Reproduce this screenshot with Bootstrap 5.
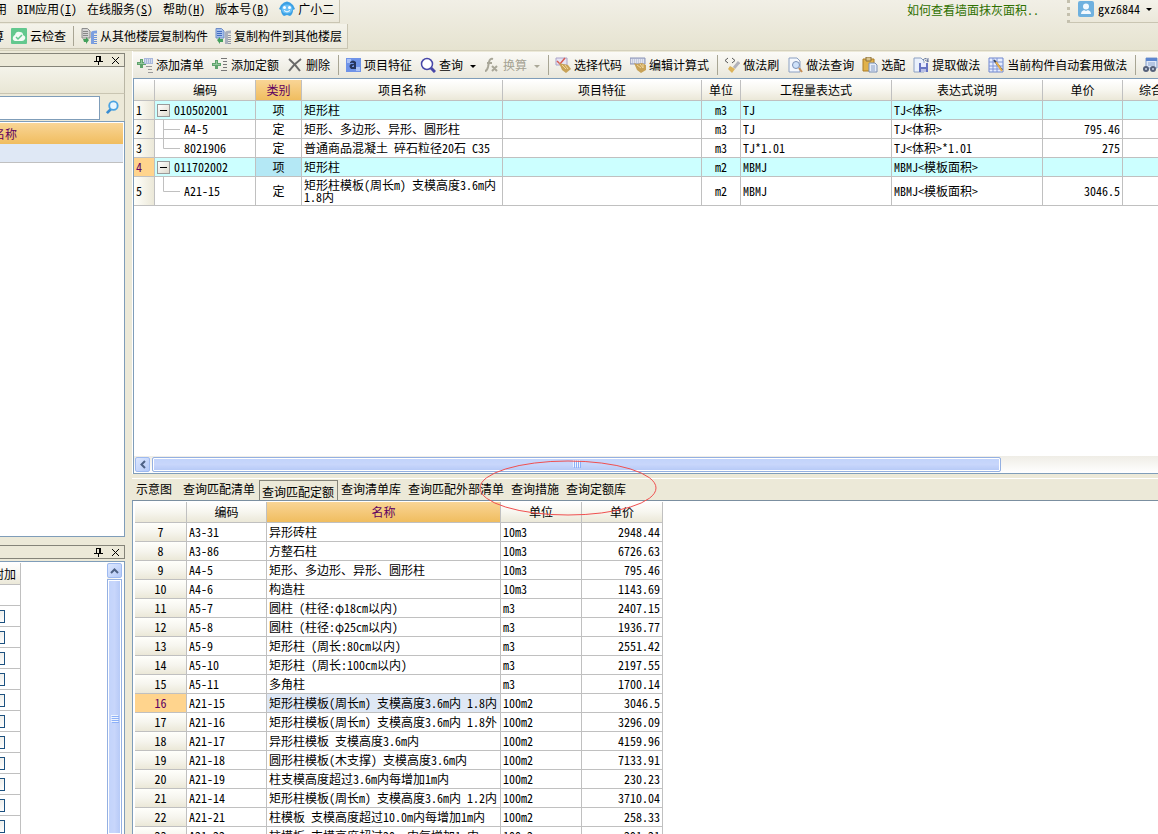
<!DOCTYPE html>
<html lang="zh-CN">
<head>
<meta charset="utf-8">
<meta name="viewport" content="width=device-width, initial-scale=1">
<title>构件做法</title>
<link href="https://cdn.jsdelivr.net/npm/bootstrap@5.3.0/dist/css/bootstrap.min.css" rel="stylesheet">
<script src="https://cdn.jsdelivr.net/npm/bootstrap@5.3.0/dist/js/bootstrap.bundle.min.js"></script>
<style>
:root{--face:#ece9d8;--line:#c0c0c0;--blue:#7f9db9;}
body{font:12px/16px "Noto Sans Mono CJK SC","Noto Sans CJK SC",sans-serif;color:#000;background:var(--face);}
button{font:inherit;color:inherit;border:0;background:none;padding:0;}
a{color:inherit;text-decoration:none;}
svg{display:block;flex:none;}
.ico{width:16px;height:16px;}
.topzone{height:51px;background:linear-gradient(#f1efe6,#e6e3d0);border-bottom:1px solid #d5d1bc;}
.strip{width:max-content;background:linear-gradient(#f4f3ea,#ebe8da);border-right:1px solid #c9c5b2;border-bottom:1px solid #c9c5b2;white-space:nowrap;}
.menus{height:23px;padding:0 5px 4px 0;gap:10px;}
.menus>:first-child{margin-left:-5px;}
.tools2{height:25px;padding-right:5px;gap:7px;margin-top:1px;}
.tools2>:first-child{margin-left:-8px;}
.tools2 button,.menus a{display:flex;gap:3px;}
.menus a{gap:0;}
.menus a svg{margin-right:3px;}
.user{height:23px;padding:0 6px 4px 10px;gap:4px;border-bottom:1px solid #c9c5b2;border-left:3px dotted #c4c0ae;background:linear-gradient(#f4f3ea,#ebe8da);padding-left:8px;}
.user .caret{margin-left:2px;}
.hint{color:#2f7000;margin-right:28px;height:19px;}
.sep{width:1px;height:20px;background:#a8a594;flex:none;margin:0 2px 0 4px;}
.caret{width:0;height:0;border:3px solid transparent;border-top-color:#000;border-bottom:0;flex:none;}
.side{width:125px;padding-top:2px;}
.panel-a{height:62%;}
.dockbar{height:14px;border:1px solid #858479;border-left:0;gap:8px;padding-right:4px;}
.sideline{border-right:1px solid #b9b6a5;}
.blank{height:27px;background:linear-gradient(#f4f3ea,#e9e6d5);border-bottom:1px solid #c9c5b2;}
.find{height:27px;}
.find input{height:24px;width:100px;border:1px solid var(--blue);border-left:0;padding:0 4px;outline:0;}
.find button{margin-left:5px;}
.treebox{border:1px solid var(--blue);border-left:0;background:#fff;padding:1px 1px 0 0;}
.hot{background:linear-gradient(#f9d596,#f0bd5f)!important;color:#600060;}
.treehead{height:21px;}
.treehead span{margin-left:-7px;}
.treesel{height:19px;background:#dfe8f5;border-bottom:1px solid var(--line);}
.pane-b{margin-top:2px;}
.extra{width:21px;}
.extra table{width:45px;flex:none;}
.grid{table-layout:fixed;border-collapse:separate;border-spacing:0;line-height:12px;white-space:nowrap;}
.grid th,.grid td{border:solid var(--line);border-width:0 1px 1px 0;padding:0 2px;height:19px;overflow:hidden;}
.grid thead th{height:21px;font-weight:400;text-align:center;background:linear-gradient(#fff,#f7f6ef 50%,#ebe8d8);padding:0;}
.grid tbody th{font-weight:400;background:linear-gradient(90deg,#fffffb,#ebe8d8);}
.grid tbody tr.list-row td{background:#cff;}
.grid tbody tr.list-row td.curcat{background:#b4e8f5;}
.grid tbody th.curhead{background:#ffd48d;color:#600060;}
.grid .code{padding:0;}
.grid .tall td,.grid .tall th{height:29px;}
.fold{width:13px;height:13px;border:1px solid #9a9a9a;background:linear-gradient(135deg,#fff,#dedacd);margin:0 4px 0 2px;flex:none;}
.fold::before{content:"";display:block;height:1px;margin:0 2px;background:#000;}
.match tbody th{text-align:center;background:linear-gradient(#fffffb,#f6f5ee 50%,#ebe8d8);padding:0;}
.match td.sel{background:#dfe8f5;}
.extra .grid thead th{text-align:right;padding-right:4px;height:22px;}
.extra .grid td{height:21px;padding:0;}
.extra input{appearance:none;display:block;width:13px;height:13px;border:1px solid #1c5180;background:linear-gradient(135deg,#e4e4de,#fff);margin:0 auto;}
.vbar{width:15px;margin-right:1px;background:linear-gradient(90deg,#f1f0ea,#fff);}
.sbtn{width:15px;height:15px;border:1px solid #9ebaf0;border-radius:2px;background:linear-gradient(135deg,#dce7fe,#b4c9f8);flex:none;}
.thumb{border:1px solid #94b0e2;border-radius:2px;box-shadow:inset 0 0 0 1px #fff;background:linear-gradient(#c1d3fb,#c8d6fb 50%,#b4c8f6);}
.vthumb{margin-top:1px;border:1px solid #94b0e2;border-bottom:0;box-shadow:inset 0 0 0 1px #fff;background:linear-gradient(90deg,#c1d3fb,#c8d6fb 50%,#b4c8f6);}
.workarea{margin-left:7px;min-width:0;}
.main-a{height:54%;border-left:1px solid #fff;}
.maintools{height:26px;background:linear-gradient(#fbfaf7,#e9e7db);white-space:nowrap;margin-top:1px;}
.maintools button{padding:0 4px;gap:3px;display:flex;align-items:center;flex:none;}
.maintools button:disabled{color:#a5a293;}
.maintools .caret{margin:2px 0 0 4px;}
.maintools button:disabled .caret{border-top-color:#aaa797;}
.gridbox{border:1px solid var(--blue);border-right:0;background:#fff;padding-top:1px;}
.works{width:1070px;}
.hbar{height:17px;background:linear-gradient(#efede6,#fff);gap:2px;padding:1px 0 1px 1px;}
.hbar .thumb{width:83%;}
.tabsrow{height:22px;border-top:1px solid #fff;margin-top:4px;padding-left:4px;white-space:nowrap;line-height:19px;}
.tabsrow a{margin-right:7px;flex:none;}
.tabsrow a.wide{margin-right:11px;}
.tabsrow a.on{border:1px solid #858479;border-bottom:0;padding:2px 3px 0 2px;height:20px;line-height:18px;margin:1px 3px 0 -7px;}
.ring{position:absolute;left:347px;top:-19px;z-index:2;pointer-events:none;}
.match{width:528px;}
.gridbox.lower{border-top-color:#7b8fa0;padding-left:2px;border-bottom:0;}
</style>
</head>
<body class="vh-100 overflow-hidden d-flex flex-column">

<svg width="0" height="0" class="position-absolute" aria-hidden="true">
  <symbol id="i-addlist" viewBox="0 0 16 16"><path d="M3 2h3v3h3v3H6v3H3V8H0V5h3z" fill="#5fa36c"/><path d="M4 3h1v3h3v1H1V6h3z" fill="#93c79c"/><path d="M7 1h9v6H7z" fill="#a9b8dc"/><path d="M8 3h7M8 5h7" stroke="#fff" stroke-dasharray="1 1"/><path d="M9 9.500h6M11 12.500h4M11 15.500h5" stroke="#999"/></symbol>
  <symbol id="i-addquota" viewBox="0 0 16 16"><path d="M3 3h3v3h3v3H6v3H3V9H0V6h3z" fill="#5fa36c"/><path d="M4 4h1v3h3v1H1V7h3z" fill="#93c79c"/><path d="M9 1.500h6M11 4.500h4M11 7.500h4M11 10.500h4M9 13.500h6" stroke="#777"/></symbol>
  <symbol id="i-del" viewBox="0 0 16 16"><path d="M2 2Q8 7 13 14M14 2Q7 7 2 14" fill="none" stroke="#6a6a6a" stroke-width="2"/></symbol>
  <symbol id="i-feat" viewBox="0 0 16 16"><path d="M1 1h15v14H1z" fill="#6f93e8"/><path d="M2 2h4v4H2zM11 10h4v4h-4z" fill="#a9c0f5"/><path d="M5 5q3-3 6 0v7H6q-3-3 0-5h3q0-2-4-1zM7 9v1h2V8z" fill="#26345c" fill-rule="evenodd"/></symbol>
  <symbol id="i-search" viewBox="0 0 16 16"><circle cx="7" cy="7" r="5.500" fill="#fff" stroke="#4747a8" stroke-width="1.500"/><path d="m11 11 4 4" stroke="#4747a8" stroke-width="3"/></symbol>
  <symbol id="i-fx" viewBox="0 0 16 16"><path d="M1 14q2 0 3-4l1-5q1-4 4-3M3 6h5M8 9l5 5M13 9l-5 5" fill="none" stroke="#a8a698" stroke-width="2"/></symbol>
  <symbol id="i-pick" viewBox="0 0 16 16"><path d="M1 1h11v7H1z" fill="#e6e3f4" stroke="#aaa4c8"/><path d="m2 4 3 3 5-6" fill="none" stroke="#d85b52" stroke-width="1.500"/><path d="m4 6 4 1 5 1 3 4-5 4-4-3z" fill="#c8a257"/><path d="m7 8 4 4M10 8l3 4" stroke="#f2d79b"/></symbol>
  <symbol id="i-edit" viewBox="0 0 16 16"><path d="M0 1h15v6H0z" fill="#c5cbe0" stroke="#8d96b8"/><path d="M1 3h13M1 5h13" stroke="#fff" stroke-dasharray="1 1"/><path d="m4 6 3 1 5-1 4 2v5l-5 3-4-3z" fill="#c8a257"/><path d="m7 8 4 3M10 7l3 4M13 7v4" stroke="#f2d79b"/></symbol>
  <symbol id="i-brush" viewBox="0 0 16 16"><path d="M4 1 1 3.500 4 6M8 1l3 2.500L8 6" fill="none" stroke="#555"/><path d="m15 5-5 6" stroke="#b2b2ba" stroke-width="3"/><path d="m6 9 5 3-3 4-4-4z" fill="#dcb35a"/></symbol>
  <symbol id="i-docfind" viewBox="0 0 16 16"><path d="M2 1h8l3 3v11H2z" fill="#f5f8fd" stroke="#8ba0c2"/><circle cx="9" cy="8" r="3.500" fill="#cfe2fa" stroke="#7b90b5"/><path d="m12 11 3 4" stroke="#c68d54" stroke-width="2"/></symbol>
  <symbol id="i-paste" viewBox="0 0 16 16"><path d="M1 2h11v12H1z" fill="#e1b24a" stroke="#ab7d25"/><path d="M4 0h5v4H4z" fill="#d9c48e" stroke="#8c713a"/><path d="M7 6h6l2 2v7H7z" fill="#e5ecf8" stroke="#798fb5"/><path d="M9 9h4M9 11h4M9 13h4" stroke="#8aa0c5"/></symbol>
  <symbol id="i-extract" viewBox="0 0 16 16"><path d="M1 1h7l3 3v11H1z" fill="#eaf1fc" stroke="#8ba0c2"/><path d="M6 6h9v9H6z" fill="#6674c2"/><path d="M8 6h5v4H8z" fill="#e8ecff"/><path d="M8 12h5v3H8z" fill="#b8bfe5"/><path d="M10 3q4-4 5 2m-3-2 3 2V1" fill="none" stroke="#68799f"/></symbol>
  <symbol id="i-auto" viewBox="0 0 16 16"><path d="M1 1h14v14H1z" fill="#e6edff" stroke="#6f86ce"/><path d="M1 5h14M1 9h14M1 12h14M5 1v14M9 1v14" stroke="#7f94d6"/><path d="m6 3 8 10" stroke="#33425f" stroke-width="2"/><path d="m8 5 6 9" stroke="#ecb14b" stroke-width="2"/></symbol>
  <symbol id="i-bino" viewBox="0 0 16 16"><path d="M4 1h11v10H4z" fill="#dfe8f8" stroke="#7e9ac9"/><path d="M4 1h11v3H4z" fill="#5c86cf"/><path d="M6 6h7M6 8h7" stroke="#8aa3cc"/><circle cx="4" cy="12" r="3" fill="#56617a"/><circle cx="11" cy="12" r="3" fill="#56617a"/><circle cx="4" cy="12" r="1" fill="#c9d4e8"/><circle cx="11" cy="12" r="1" fill="#c9d4e8"/></symbol>
  <symbol id="i-copyfrom" viewBox="0 0 16 16"><path d="M1 .5h5.500L9 3v7H1z" fill="#d4d4d4" stroke="#8d8d8d"/><path d="M2 3.500h5M2 5.500h5M2 7.500h5" stroke="#888"/><path d="M10 4.500q0-2 6-2v3h-3V16h-3z" fill="#7b9fe0"/><path d="M13 7.500h3M13 9.500h3M13 11.500h3M13 13.500h3M13 15.500h3" stroke="#6c92d8"/><path d="M2 11h3V9l3 3-3 4v-2H3z" fill="#43a05c"/></symbol>
  <symbol id="i-copyto" viewBox="0 0 16 16"><path d="M1 .5h5.500L9 3v7H1z" fill="#a7c0ec" stroke="#6c8cc8"/><path d="M2 3.500h5M2 5.500h5M2 7.500h5" stroke="#426cc0"/><path d="M10 4.500q0-2 6-2v3h-3V16h-3z" fill="#aab0bd"/><path d="M13 7.500h3M13 9.500h3M13 11.500h3M13 13.500h3M13 15.500h3" stroke="#8f95a5"/><path d="M8 14H5v2l-3-4 3-3v2h3z" fill="#43a05c"/></symbol>
  <symbol id="i-cloud" viewBox="0 0 16 16"><rect width="16" height="16" rx="1" fill="#63c88e"/><path d="M4 13q-3-1-2-4 1-2 2-2 1-4 5-3 3 0 3 3 3 1 2 4-1 2-3 2z" fill="#f4fbf6"/><path d="m5 9 2 2 4-4" fill="none" stroke="#63c88e" stroke-width="1.500"/></symbol>
  <symbol id="i-robot" viewBox="0 0 16 16"><path d="M2 4q6-7 12 0l2 4-2 1q0 4-3 6l-3-1-3 1q-3-2-3-6L0 8z" fill="#3ba0e4"/><ellipse cx="8" cy="8" rx="5.500" ry="4.500" fill="#6cc1f7"/><circle cx="5.500" cy="6.500" r="1.500" fill="#fff"/><circle cx="10.500" cy="6.500" r="1.500" fill="#fff"/><path d="M5 9.500q3 3 6 0" fill="none" stroke="#fff"/></symbol>
  <symbol id="i-user" viewBox="0 0 16 16"><rect width="16" height="16" rx="2" fill="#6fb1df"/><circle cx="8" cy="5.500" r="3" fill="#f2f9ff"/><path d="M3 13q0-3 3-4l2 1 2-1q3 1 3 4z" fill="#f2f9ff"/></symbol>
  <symbol id="i-pin" viewBox="0 0 9 9"><path d="M2 .5h5M2.500 0v5M6 0v5M0 5.500h9M4.500 6v3" fill="none" stroke="#000"/><path d="M5 0h2v5H5z"/></symbol>
  <symbol id="i-close" viewBox="0 0 9 9"><path d="m1 1 7 7M8 1 1 8" stroke="#000"/></symbol>
</svg>

<header class="topzone d-flex justify-content-between align-items-start flex-shrink-0">
  <div>
    <nav class="strip menus d-flex align-items-center">
      <a href="#">用</a><a href="#">BIM应用(<u>I</u>)</a><a href="#">在线服务(<u>S</u>)</a><a href="#">帮助(<u>H</u>)</a><a href="#">版本号(<u>B</u>)</a>
      <a href="#"><svg class="ico"><use href="#i-robot"/></svg>广小二</a>
    </nav>
    <div class="strip tools2 d-flex align-items-center">
      <button type="button">算</button>
      <button type="button"><svg class="ico"><use href="#i-cloud"/></svg>云检查</button>
      <span class="sep m-0"></span>
      <button type="button"><svg class="ico"><use href="#i-copyfrom"/></svg>从其他楼层复制构件</button>
      <button type="button"><svg class="ico"><use href="#i-copyto"/></svg>复制构件到其他楼层</button>
    </div>
  </div>
  <div class="d-flex">
    <a href="#" class="hint d-flex align-items-center">如何查看墙面抹灰面积..</a>
    <button type="button" class="user d-flex align-items-center"><svg class="ico"><use href="#i-user"/></svg>gxz6844<span class="caret"></span></button>
  </div>
</header>

<div class="d-flex flex-grow-1 overflow-hidden">
  <aside class="side flex-shrink-0 d-flex flex-column overflow-hidden">
    <section class="panel-a d-flex flex-column flex-shrink-0">
      <div class="dockbar d-flex align-items-center justify-content-end flex-shrink-0">
        <button type="button" aria-label="固定"><svg width="9" height="9"><use href="#i-pin"/></svg></button>
        <button type="button" aria-label="关闭"><svg width="9" height="9"><use href="#i-close"/></svg></button>
      </div>
      <div class="blank sideline flex-shrink-0"></div>
      <div class="find sideline d-flex align-items-center flex-shrink-0">
        <input type="text" aria-label="搜索构件">
        <button type="button" aria-label="搜索"><svg width="15" height="15" viewBox="0 0 16 16"><circle cx="9" cy="6" r="4.500" fill="#e8f6ff" stroke="#4aa3e2" stroke-width="2"/><path d="m6 10-4 4" stroke="#3a8ed2" stroke-width="3"/></svg></button>
      </div>
      <div class="treebox flex-grow-1">
        <div class="treehead hot d-flex align-items-center"><span>名称</span></div>
        <div class="treesel"></div>
      </div>
    </section>
    <section class="d-flex flex-column flex-grow-1 mt-2 overflow-hidden">
      <div class="dockbar d-flex align-items-center justify-content-end flex-shrink-0">
        <button type="button" aria-label="固定"><svg width="9" height="9"><use href="#i-pin"/></svg></button>
        <button type="button" aria-label="关闭"><svg width="9" height="9"><use href="#i-close"/></svg></button>
      </div>
      <div class="treebox pane-b border-bottom-0 d-flex justify-content-between flex-grow-1 overflow-hidden">
        <div class="extra d-flex justify-content-end align-items-start">
          <table class="grid">
            <thead><tr><th>附加</th></tr></thead>
            <tbody>
              <tr><td></td></tr>
              <tr><td><input type="checkbox" aria-label="附加 1"></td></tr>
              <tr><td><input type="checkbox" aria-label="附加 2"></td></tr>
              <tr><td><input type="checkbox" aria-label="附加 3"></td></tr>
              <tr><td><input type="checkbox" aria-label="附加 4"></td></tr>
              <tr><td><input type="checkbox" aria-label="附加 5"></td></tr>
              <tr><td><input type="checkbox" aria-label="附加 6"></td></tr>
              <tr><td><input type="checkbox" aria-label="附加 7"></td></tr>
              <tr><td><input type="checkbox" aria-label="附加 8"></td></tr>
              <tr><td><input type="checkbox" aria-label="附加 9"></td></tr>
              <tr><td><input type="checkbox" aria-label="附加 10"></td></tr>
              <tr><td><input type="checkbox" aria-label="附加 11"></td></tr>
            </tbody>
          </table>
        </div>
        <div class="vbar d-flex flex-column">
          <button type="button" class="sbtn d-flex align-items-center justify-content-center" aria-label="向上"><svg width="9" height="6"><path d="m1 5 3.500-3.500L8 5" fill="none" stroke="#4d6185" stroke-width="2"/></svg></button>
          <div class="vthumb flex-grow-1 d-flex align-items-center justify-content-center"><svg width="8" height="8" class="mt-4"><path d="M0 .5h7M0 2.500h7M0 4.500h7M0 6.500h7" stroke="#eef4fe"/><path d="M1 1.500h7M1 3.500h7M1 5.500h7M1 7.500h7" stroke="#8cb0f8"/></svg></div>
        </div>
      </div>
    </section>
  </aside>

  <main class="workarea flex-grow-1 d-flex flex-column overflow-hidden">
    <section class="main-a d-flex flex-column flex-shrink-0">
      <div class="maintools d-flex align-items-center flex-shrink-0">
        <button type="button"><svg class="ico"><use href="#i-addlist"/></svg>添加清单</button>
        <button type="button"><svg class="ico"><use href="#i-addquota"/></svg>添加定额</button>
        <button type="button"><svg class="ico"><use href="#i-del"/></svg>删除</button>
        <span class="sep"></span>
        <button type="button"><svg class="ico"><use href="#i-feat"/></svg>项目特征</button>
        <button type="button"><svg class="ico"><use href="#i-search"/></svg>查询<span class="caret"></span></button>
        <button type="button" disabled><svg class="ico"><use href="#i-fx"/></svg>换算<span class="caret"></span></button>
        <span class="sep"></span>
        <button type="button"><svg class="ico"><use href="#i-pick"/></svg>选择代码</button>
        <button type="button"><svg class="ico"><use href="#i-edit"/></svg>编辑计算式</button>
        <span class="sep"></span>
        <button type="button"><svg class="ico"><use href="#i-brush"/></svg>做法刷</button>
        <button type="button"><svg class="ico"><use href="#i-docfind"/></svg>做法查询</button>
        <button type="button"><svg class="ico"><use href="#i-paste"/></svg>选配</button>
        <button type="button"><svg class="ico"><use href="#i-extract"/></svg>提取做法</button>
        <button type="button"><svg class="ico"><use href="#i-auto"/></svg>当前构件自动套用做法</button>
        <span class="sep"></span>
        <button type="button" aria-label="查找"><svg class="ico"><use href="#i-bino"/></svg></button>
      </div>
      <div class="gridbox d-flex flex-column flex-grow-1 overflow-hidden">
        <div class="flex-grow-1 overflow-hidden">
          <table class="grid works">
            <colgroup><col style="width:21px"><col style="width:101px"><col style="width:46px"><col style="width:201px"><col style="width:199px"><col style="width:39px"><col style="width:151px"><col style="width:151px"><col style="width:80px"><col style="width:81px"></colgroup>
            <thead><tr><th></th><th>编码</th><th class="hot">类别</th><th>项目名称</th><th>项目特征</th><th>单位</th><th>工程量表达式</th><th>表达式说明</th><th>单价</th><th>综合单价</th></tr></thead>
            <tbody>
              <tr class="list-row"><th>1</th><td class="code"><div class="d-flex align-items-center"><button type="button" class="fold" aria-label="折叠"></button>010502001</div></td><td class="text-center">项</td><td>矩形柱</td><td></td><td class="text-center">m3</td><td>TJ</td><td>TJ&lt;体积&gt;</td><td></td><td></td></tr>
              <tr><th>2</th><td class="code"><div class="d-flex align-items-center"><svg width="29" height="18"><path d="M8.500 0v18M8 9.500h17" stroke="#c0c0c0" fill="none"/></svg>A4-5</div></td><td class="text-center">定</td><td>矩形、多边形、异形、圆形柱</td><td></td><td class="text-center">m3</td><td>TJ</td><td>TJ&lt;体积&gt;</td><td class="text-end">795.46</td><td></td></tr>
              <tr><th>3</th><td class="code"><div class="d-flex align-items-center"><svg width="29" height="18"><path d="M8.500 0v9.500H25" stroke="#c0c0c0" fill="none"/></svg>8021906</div></td><td class="text-center">定</td><td>普通商品混凝土 碎石粒径20石 C35</td><td></td><td class="text-center">m3</td><td>TJ*1.01</td><td>TJ&lt;体积&gt;*1.01</td><td class="text-end">275</td><td></td></tr>
              <tr class="list-row"><th class="curhead">4</th><td class="code"><div class="d-flex align-items-center"><button type="button" class="fold" aria-label="折叠"></button>011702002</div></td><td class="text-center curcat">项</td><td>矩形柱</td><td></td><td class="text-center">m2</td><td>MBMJ</td><td>MBMJ&lt;模板面积&gt;</td><td></td><td></td></tr>
              <tr class="tall"><th>5</th><td class="code"><div class="d-flex align-items-center"><svg width="29" height="28"><path d="M8.500 0v14.500H25" stroke="#c0c0c0" fill="none"/></svg>A21-15</div></td><td class="text-center">定</td><td>矩形柱模板(周长m) 支模高度3.6m内<br>1.8内</td><td></td><td class="text-center">m2</td><td>MBMJ</td><td>MBMJ&lt;模板面积&gt;</td><td class="text-end">3046.5</td><td></td></tr>
            </tbody>
          </table>
        </div>
        <div class="hbar d-flex flex-shrink-0">
          <button type="button" class="sbtn d-flex align-items-center justify-content-center" aria-label="向左"><svg width="6" height="9"><path d="M5 1 1.500 4.500 5 8" fill="none" stroke="#4d6185" stroke-width="2"/></svg></button>
          <div class="thumb d-flex align-items-center justify-content-center"><svg width="8" height="8"><path d="M.5 0v7M2.500 0v7M4.500 0v7M6.500 0v7" stroke="#eef4fe"/><path d="M1.500 1v7M3.500 1v7M5.500 1v7M7.500 1v7" stroke="#8cb0f8"/></svg></div>
        </div>
      </div>
    </section>

    <nav class="tabsrow d-flex position-relative flex-shrink-0">
      <a href="#" class="wide">示意图</a><a href="#" class="wide">查询匹配清单</a><a href="#" class="on" aria-current="page">查询匹配定额</a><a href="#">查询清单库</a><a href="#">查询匹配外部清单</a><a href="#">查询措施</a><a href="#">查询定额库</a>
      <svg class="ring" width="180" height="56"><ellipse cx="89" cy="28" rx="88" ry="27" fill="none" stroke="#f05050"/></svg>
    </nav>

    <section class="gridbox lower flex-grow-1 overflow-hidden">
      <table class="grid match">
        <colgroup><col style="width:52px"><col style="width:80px"><col style="width:234px"><col style="width:81px"><col style="width:81px"></colgroup>
        <thead><tr><th></th><th>编码</th><th class="hot">名称</th><th>单位</th><th>单价</th></tr></thead>
        <tbody>
          <tr><th>7</th><td>A3-31</td><td>异形砖柱</td><td>10m3</td><td class="text-end">2948.44</td></tr>
          <tr><th>8</th><td>A3-86</td><td>方整石柱</td><td>10m3</td><td class="text-end">6726.63</td></tr>
          <tr><th>9</th><td>A4-5</td><td>矩形、多边形、异形、圆形柱</td><td>10m3</td><td class="text-end">795.46</td></tr>
          <tr><th>10</th><td>A4-6</td><td>构造柱</td><td>10m3</td><td class="text-end">1143.69</td></tr>
          <tr><th>11</th><td>A5-7</td><td>圆柱 (柱径:φ18cm以内)</td><td>m3</td><td class="text-end">2407.15</td></tr>
          <tr><th>12</th><td>A5-8</td><td>圆柱 (柱径:φ25cm以内)</td><td>m3</td><td class="text-end">1936.77</td></tr>
          <tr><th>13</th><td>A5-9</td><td>矩形柱 (周长:80cm以内)</td><td>m3</td><td class="text-end">2551.42</td></tr>
          <tr><th>14</th><td>A5-10</td><td>矩形柱 (周长:100cm以内)</td><td>m3</td><td class="text-end">2197.55</td></tr>
          <tr><th>15</th><td>A5-11</td><td>多角柱</td><td>m3</td><td class="text-end">1700.14</td></tr>
          <tr><th class="curhead">16</th><td>A21-15</td><td class="sel">矩形柱模板(周长m) 支模高度3.6m内 1.8内</td><td>100m2</td><td class="text-end">3046.5</td></tr>
          <tr><th>17</th><td>A21-16</td><td>矩形柱模板(周长m) 支模高度3.6m内 1.8外</td><td>100m2</td><td class="text-end">3296.09</td></tr>
          <tr><th>18</th><td>A21-17</td><td>异形柱模板 支模高度3.6m内</td><td>100m2</td><td class="text-end">4159.96</td></tr>
          <tr><th>19</th><td>A21-18</td><td>圆形柱模板(木支撑) 支模高度3.6m内</td><td>100m2</td><td class="text-end">7133.91</td></tr>
          <tr><th>20</th><td>A21-19</td><td>柱支模高度超过3.6m内每增加1m内</td><td>100m2</td><td class="text-end">230.23</td></tr>
          <tr><th>21</th><td>A21-14</td><td>矩形柱模板(周长m) 支模高度3.6m内 1.2内</td><td>100m2</td><td class="text-end">3710.04</td></tr>
          <tr><th>22</th><td>A21-21</td><td>柱模板 支模高度超过10.0m内每增加1m内</td><td>100m2</td><td class="text-end">258.33</td></tr>
          <tr><th>23</th><td>A21-22</td><td>柱模板 支模高度超过20.m内每增加1m内</td><td>100m2</td><td class="text-end">291.21</td></tr>
        </tbody>
      </table>
    </section>
  </main>
</div>
</body>
</html>
